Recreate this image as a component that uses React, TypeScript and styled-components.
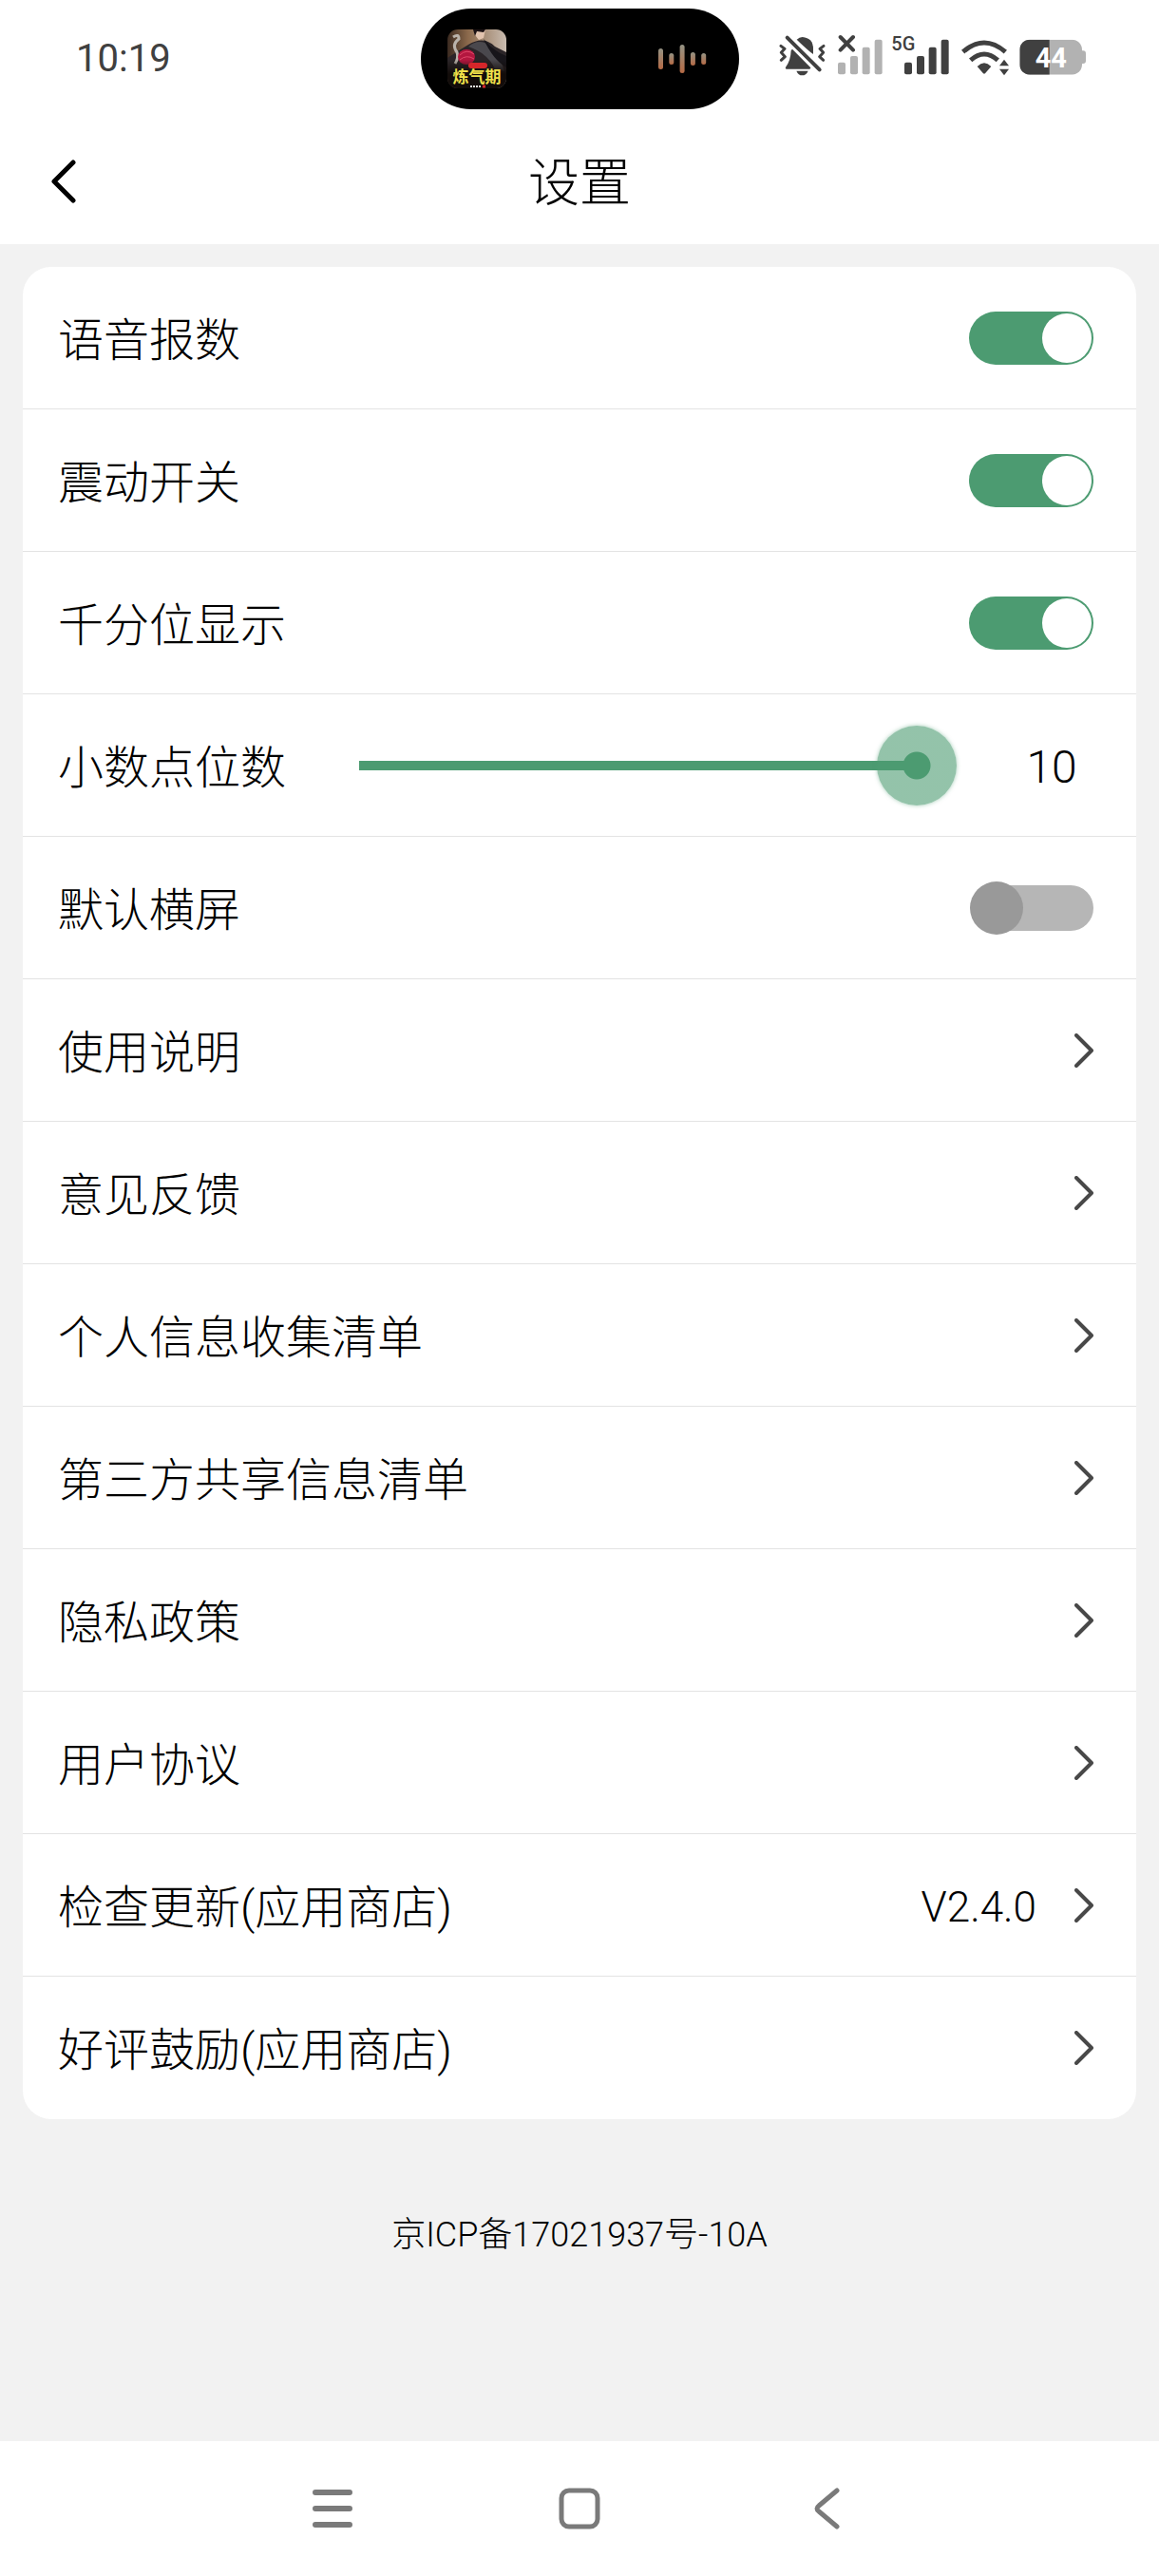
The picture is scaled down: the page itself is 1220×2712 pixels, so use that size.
import React, { useState } from "react";
import styled, { createGlobalStyle } from "styled-components";

const GREEN = "#4c9b71";
const INK = "#404040";
const FADED = "#b2b2b2";

const GlobalStyle = createGlobalStyle`
  *, *::before, *::after { box-sizing: border-box; }
  body {
    margin: 0;
    background: #f2f2f2;
    color: #000;
    font-family: Roboto, "Noto Sans CJK SC", sans-serif;
    font-weight: 300;
  }
  button, input { font: inherit; color: inherit; margin: 0; }
  button { border: 0; padding: 0; background: none; cursor: pointer; }
  svg { display: block; }
`;

const Screen = styled.div`
  display: flex;
  flex-direction: column;
  min-height: 100vh;
`;

const StatusBar = styled.div`
  display: grid;
  grid-template-columns: 1fr auto 1fr;
  align-items: center;
  height: 124px;
  padding: 0 76px;
  background: #fff;
`;

const Clock = styled.time`
  padding-left: 4px;
  font-size: 40px;
  font-weight: 400;
  line-height: 56px;
  color: ${INK};
`;

const Island = styled.div`
  display: flex;
  align-items: center;
  justify-content: space-between;
  width: 335px;
  height: 106px;
  padding: 0 34px 0 28px;
  border-radius: 53px;
  background: #000;
`;

const StatusIcons = styled.div`
  display: flex;
  justify-content: flex-end;
  gap: 8px;
`;

const TitleBar = styled.header`
  display: grid;
  grid-template-columns: 1fr auto 1fr;
  align-items: center;
  height: 133px;
  padding: 0 54px;
  background: #fff;
`;

const BackButton = styled.button`
  justify-self: start;
`;

const Title = styled.h1`
  margin: 0;
  padding-top: 6px;
  font-size: 54px;
  font-weight: 300;
  line-height: 80px;
`;

const Content = styled.main`
  flex: 1;
  padding: 24px;
`;

const Card = styled.ul`
  margin: 0;
  padding: 0;
  list-style: none;
  border-radius: 30px;
  background: #fff;
`;

const Row = styled.li`
  display: flex;
  height: 150px;
  &:not(:last-child) { border-bottom: 1px solid #e3e3e3; }
`;

const RowBody = styled.div`
  display: flex;
  flex: 1;
  align-items: center;
  padding: 0 45px 0 37px;
`;

const RowLink = styled(RowBody).attrs({ as: "button", type: "button" })`
  text-align: left;
`;

const Label = styled.span`
  flex: 1;
  padding-top: 6px;
  font-size: 48px;
  line-height: 72px;
  white-space: nowrap;
`;

const SliderLabel = styled(Label)`
  flex: none;
  width: 317px;
`;

const Version = styled.span`
  margin-right: 40px;
  padding-top: 4px;
  font-size: 44px;
  line-height: 72px;
`;

const Toggle = styled.input`
  appearance: none;
  display: grid;
  align-items: center;
  width: 131px;
  height: 56px;
  cursor: pointer;

  &::before, &::after {
    content: "";
    grid-area: 1 / 1;
  }
  &::before {
    height: 48px;
    margin-left: 2px;
    border-radius: 28px;
    background: #b6b6b6;
  }
  &::after {
    width: 56px;
    height: 56px;
    margin: 0 1px;
    border-radius: 50%;
    background: #999;
  }
  &:checked::before {
    height: 56px;
    margin-left: 0;
    background: ${GREEN};
  }
  &:checked::after {
    justify-self: end;
    width: 52px;
    height: 52px;
    margin: 0 2px;
    background: #fff;
  }
`;

const Slider = styled.input`
  appearance: none;
  flex: 1;
  min-width: 0;
  height: 84px;
  background: linear-gradient(${GREEN}, ${GREEN}) left center / var(--fill) 10px no-repeat;
  cursor: pointer;

  &::-webkit-slider-thumb {
    appearance: none;
    width: 84px;
    height: 84px;
    border-radius: 50%;
    background: radial-gradient(circle, ${GREEN} 14px, rgba(76, 155, 113, 0.6) 15px);
    box-shadow: 0 0 4px rgba(76, 155, 113, 0.5);
  }
`;

const SliderValue = styled.output`
  width: 144px;
  padding: 4px 0 0 56px;
  font-size: 48px;
  line-height: 72px;
  text-align: center;
`;

const Filing = styled.p`
  margin: 94px 0 0;
  font-size: 36px;
  line-height: 56px;
  text-align: center;
`;

const NavBar = styled.nav`
  display: flex;
  align-items: center;
  justify-content: center;
  gap: 200px;
  height: 142px;
  background: #fff;
`;

const NavButton = styled.button`
  display: grid;
  place-items: center;
  width: 60px;
  height: 60px;
`;

function AlbumArt() {
  return (
    <svg width="62" height="62" viewBox="0 0 62 62" aria-hidden="true">
      <defs>
        <clipPath id="cover"><rect width="62" height="62" rx="11" /></clipPath>
        <linearGradient id="coverSky" x1="0" y1="0" x2="1" y2="0">
          <stop offset="0" stopColor="#3b2a20" />
          <stop offset="0.35" stopColor="#8c6a4c" />
          <stop offset="1" stopColor="#c9bcb0" />
        </linearGradient>
        <linearGradient id="coverShade" x1="0" y1="0" x2="0" y2="1">
          <stop offset="0" stopColor="#120c0a" stopOpacity="0" />
          <stop offset="0.5" stopColor="#120c0a" />
        </linearGradient>
      </defs>
      <g clipPath="url(#cover)">
        <rect width="62" height="62" fill="url(#coverSky)" />
        <path d="M0 30 Q12 22 22 16 Q38 6 50 18 L62 24 V62 H0Z" fill="#2b2528" />
        <path d="M22 18 Q34 8 46 18 Q56 30 60 44 L50 42 Q44 26 22 18Z" fill="#4a484d" />
        <path d="M38 10 Q50 24 62 28 V40 Q48 32 38 10Z" fill="#17151a" />
        <path d="M6 8 Q12 4 12 10 Q4 16 10 24 Q12 30 8 36" fill="none" stroke="#b9b2aa" strokeWidth="3" />
        <path d="M28 0 H40 L38 9 L33 11 L29 6Z" fill="#e2c3ae" />
        <path d="M27 0 H40 L38 3 L31 2 L29 7Z" fill="#1c1214" />
        <ellipse cx="20" cy="29" rx="9" ry="8" fill="#b3173f" />
        <path d="M13 27 Q20 20 28 26 M13 32 Q20 26 28 31" fill="none" stroke="#e0486a" strokeWidth="1" />
        <rect y="32" width="62" height="30" fill="url(#coverShade)" />
        <rect x="22" y="35" width="20" height="6" rx="3" fill="#d6262a" />
        <text x="31" y="56" textAnchor="middle" fontSize="17" fontWeight="700" fill="#efe04a" fontFamily="'Noto Sans CJK SC', sans-serif">炼气期</text>
        <path d="M24 60 H35" stroke="#ddd" strokeWidth="2" strokeDasharray="2 1" />
        <path d="M37 60 H40" stroke="#d6262a" strokeWidth="3" />
      </g>
    </svg>
  );
}

function SoundWave() {
  const bars = [22, 12, 30, 14, 12];
  return (
    <svg width="52" height="30" viewBox="0 0 52 30" aria-hidden="true">
      <defs>
        <linearGradient id="wave" x1="0" y1="0" x2="0" y2="1">
          <stop offset="0" stopColor="#949384" />
          <stop offset="1" stopColor="#b56a45" />
        </linearGradient>
      </defs>
      {bars.map((h, i) => (
        <rect key={i} x={1 + i * 11.3} y={15 - h / 2} width="5" height={h} rx="2.5" fill="url(#wave)" />
      ))}
    </svg>
  );
}

function MutedBell() {
  return (
    <svg width="54" height="62" viewBox="60 63 162 186" role="img" aria-label="静音">
      <g fill={INK}>
        <path d="M102 125 L160 184 Q160 188 156 188 H84 Q78 188 82 181 Q97 160 98 130Z" />
        <path d="M116 95 Q124 87 134 87 Q168 90 168 124 V141 Q150 128 116 95Z" />
        <path d="M115 194 H152 Q146 208 133 208 Q121 208 115 194Z" />
      </g>
      <g fill="none" strokeLinecap="round" strokeLinejoin="round">
        <path d="M86 89 L188 190" stroke="#fff" strokeWidth="24" />
        <path d="M86 89 L188 190" stroke={INK} strokeWidth="12" />
        <path d="M66 115 L78 124 L67 136 L79 149 L67 160" stroke={INK} strokeWidth="9" />
        <path d="M201 115 L189 124 L200 136 L188 149 L200 160" stroke={INK} strokeWidth="9" />
      </g>
    </svg>
  );
}

const BARS = [
  { x: 0, top: 167 },
  { x: 39, top: 147 },
  { x: 77, top: 119 },
  { x: 116, top: 95 },
];

function SignalBars({ x, color }: { x: number; color: string }) {
  return (
    <g fill={color}>
      {BARS.map((bar) => (
        <rect key={bar.x} x={x + bar.x} y={bar.top} width="24" height={205 - bar.top} rx="6" />
      ))}
    </g>
  );
}

function NoSignal() {
  return (
    <svg width="48" height="62" viewBox="246 63 144 186" role="img" aria-label="无信号">
      <SignalBars x={246} color={FADED} />
      <path d="M254 87 L294 128 M294 87 L254 128" stroke={INK} strokeWidth="12" strokeLinecap="round" />
    </svg>
  );
}

function Signal5G() {
  return (
    <svg width="64" height="62" viewBox="414 63 192 186" role="img" aria-label="5G 信号">
      <SignalBars x={456} color={INK} />
      <text x="415" y="128" fontSize="60" fontWeight="500" fill={INK}>5G</text>
    </svg>
  );
}

function Wifi() {
  return (
    <svg width="53" height="62" viewBox="630 63 159 186" role="img" aria-label="无线网络">
      <g fill="none" stroke={INK} strokeWidth="15">
        <path d="M641 134 Q708 76 775 134" />
        <path d="M665 160 Q708 122 751 160" />
      </g>
      <g fill={INK}>
        <path d="M686 180 Q708 158 730 180 L711 202 Q708 204 705 202Z" />
        <path d="M771 158 L786 178 H756Z" />
        <path d="M756 188 H786 L771 208Z" />
      </g>
    </svg>
  );
}

function Battery() {
  return (
    <svg width="73" height="62" viewBox="813 63 219 186" role="img" aria-label="电量 44%">
      <defs>
        <clipPath id="cell"><rect x="820" y="95" width="197" height="111" rx="32" /></clipPath>
      </defs>
      <rect x="1004" y="130" width="25" height="41" rx="9" fill={FADED} />
      <g clipPath="url(#cell)">
        <rect x="820" y="95" width="197" height="111" fill={FADED} />
        <rect x="820" y="95" width="94" height="111" fill={INK} />
      </g>
      <text x="919" y="183" textAnchor="middle" fontSize="87" fontWeight="700" fill="#fff">44</text>
    </svg>
  );
}

function Chevron() {
  return (
    <svg width="20" height="36" viewBox="0 0 20 36" aria-hidden="true">
      <path d="M2 2 L18 18 L2 34" fill="none" stroke="#484848" strokeWidth="4" strokeLinecap="round" strokeLinejoin="round" />
    </svg>
  );
}

type ToggleKey = "voice" | "vibrate" | "thousands" | "landscape";

const LINKS: { label: string; note?: string }[] = [
  { label: "使用说明" },
  { label: "意见反馈" },
  { label: "个人信息收集清单" },
  { label: "第三方共享信息清单" },
  { label: "隐私政策" },
  { label: "用户协议" },
  { label: "检查更新(应用商店)", note: "V2.4.0" },
  { label: "好评鼓励(应用商店)" },
];

export default function App() {
  const [on, setOn] = useState<Record<ToggleKey, boolean>>({
    voice: true,
    vibrate: true,
    thousands: true,
    landscape: false,
  });
  const [digits, setDigits] = useState(10);

  const toggleRow = (key: ToggleKey, label: string) => (
    <Row>
      <RowBody>
        <Label as="label" htmlFor={key}>{label}</Label>
        <Toggle
          id={key}
          type="checkbox"
          checked={on[key]}
          onChange={(e) => setOn({ ...on, [key]: e.target.checked })}
        />
      </RowBody>
    </Row>
  );

  const fill = { "--fill": `calc((100% - 84px) * ${digits / 10} + 42px)` } as React.CSSProperties;

  return (
    <Screen>
      <GlobalStyle />
      <StatusBar>
        <Clock>10:19</Clock>
        <Island>
          <AlbumArt />
          <SoundWave />
        </Island>
        <StatusIcons>
          <MutedBell />
          <NoSignal />
          <Signal5G />
          <Wifi />
          <Battery />
        </StatusIcons>
      </StatusBar>

      <TitleBar>
        <BackButton type="button" aria-label="返回">
          <svg width="26" height="46" viewBox="0 0 26 46" aria-hidden="true">
            <path d="M23 3 L3 23 L23 43" fill="none" stroke="#000" strokeWidth="5" strokeLinecap="round" strokeLinejoin="round" />
          </svg>
        </BackButton>
        <Title>设置</Title>
      </TitleBar>

      <Content>
        <Card>
          {toggleRow("voice", "语音报数")}
          {toggleRow("vibrate", "震动开关")}
          {toggleRow("thousands", "千分位显示")}
          <Row>
            <RowBody>
              <SliderLabel as="label" htmlFor="digits">小数点位数</SliderLabel>
              <Slider
                id="digits"
                type="range"
                min={0}
                max={10}
                value={digits}
                style={fill}
                onChange={(e) => setDigits(Number(e.target.value))}
              />
              <SliderValue htmlFor="digits">{digits}</SliderValue>
            </RowBody>
          </Row>
          {toggleRow("landscape", "默认横屏")}
          {LINKS.map((link) => (
            <Row key={link.label}>
              <RowLink>
                <Label>{link.label}</Label>
                {link.note && <Version>{link.note}</Version>}
                <Chevron />
              </RowLink>
            </Row>
          ))}
        </Card>
        <Filing>京ICP备17021937号-10A</Filing>
      </Content>

      <NavBar>
        <NavButton type="button" aria-label="最近任务">
          <svg width="42" height="42" viewBox="0 0 42 42" aria-hidden="true">
            <path d="M3 4 H39 M3 21 H39 M3 38 H39" stroke="#7a7a7a" strokeWidth="6" strokeLinecap="round" />
          </svg>
        </NavButton>
        <NavButton type="button" aria-label="主屏幕">
          <svg width="44" height="44" viewBox="0 0 44 44" aria-hidden="true">
            <rect x="3" y="3" width="38" height="38" rx="8" fill="none" stroke="#7a7a7a" strokeWidth="5" />
          </svg>
        </NavButton>
        <NavButton type="button" aria-label="返回上一页">
          <svg width="28" height="44" viewBox="0 0 28 44" aria-hidden="true">
            <path d="M25 3 L6 19 Q2 22 6 25 L25 41" fill="none" stroke="#7a7a7a" strokeWidth="5" strokeLinecap="round" strokeLinejoin="round" />
          </svg>
        </NavButton>
      </NavBar>
    </Screen>
  );
}
